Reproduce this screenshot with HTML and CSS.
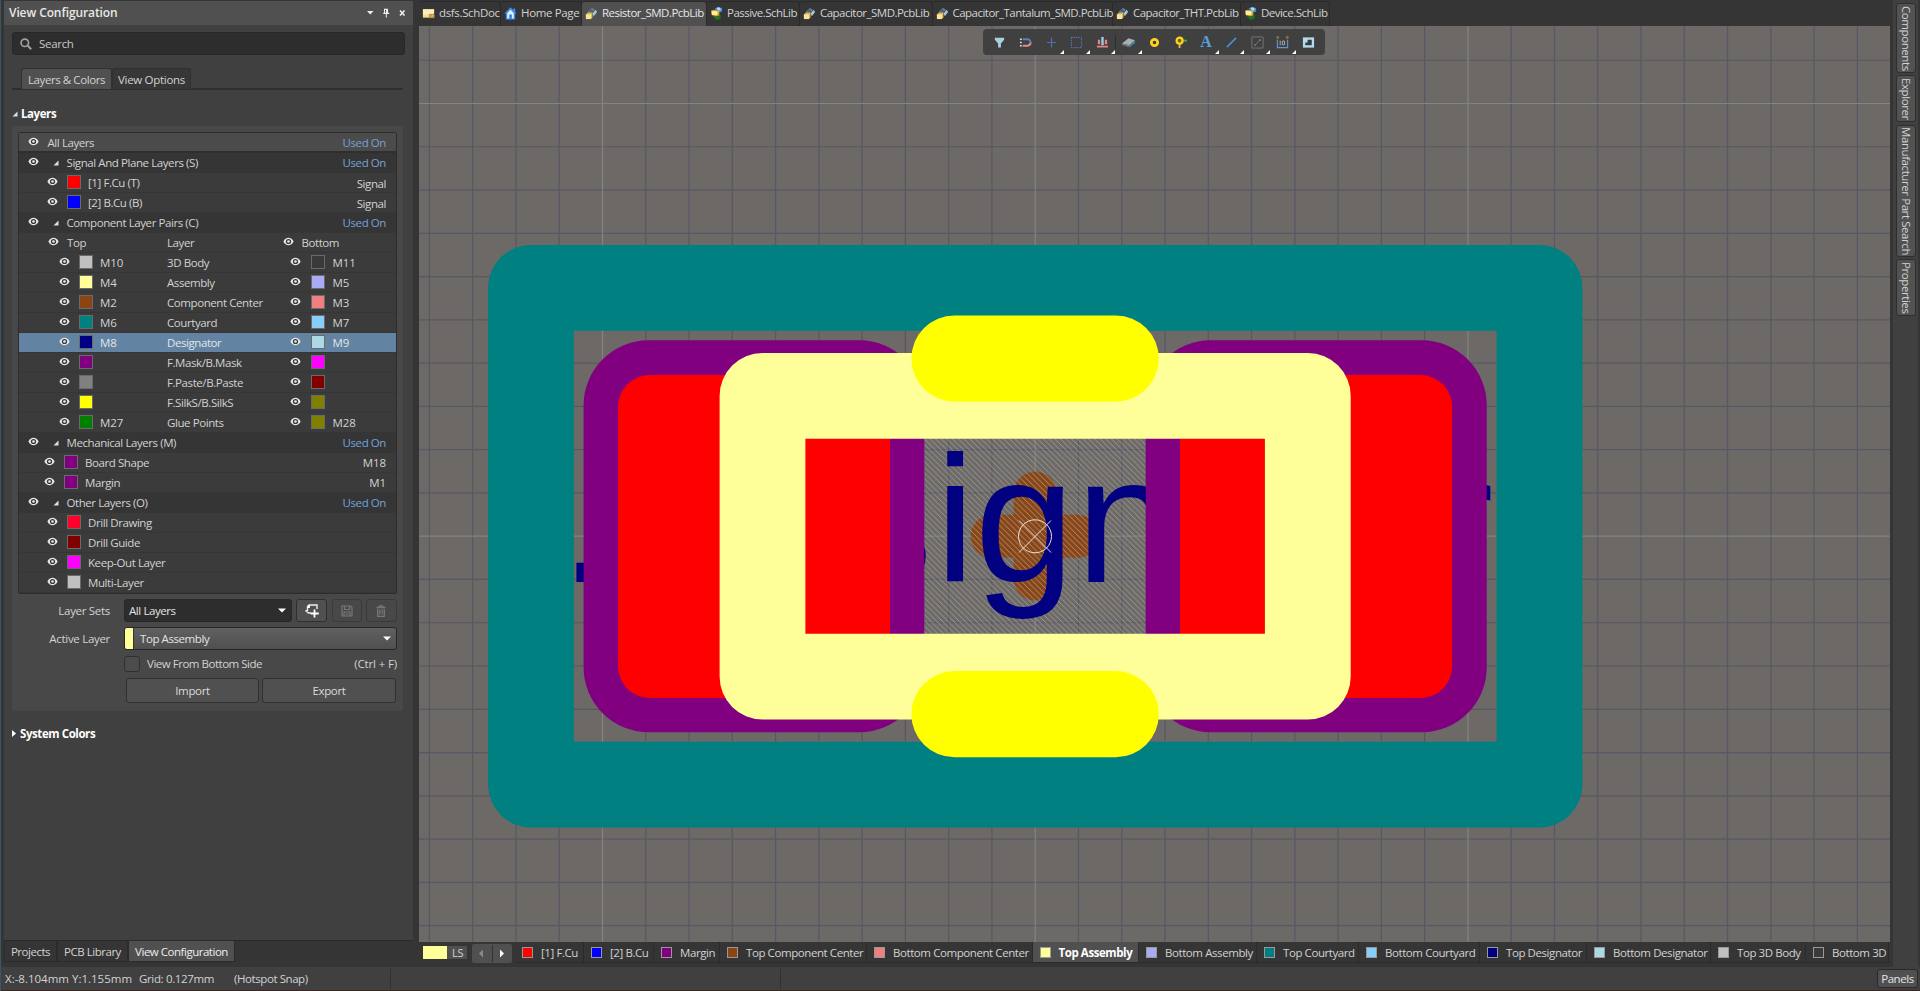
FILE: index.html
```html
<!DOCTYPE html>
<html lang="en">
<head>
<meta charset="utf-8">
<title>View Configuration</title>
<link rel="stylesheet" href="styles.css">
</head>
<body>
<svg class="defs" aria-hidden="true">
  <symbol id="eye" viewBox="0 0 12 10"><path d="M.3 5C1.7 2.1 3.6.8 6 .8S10.300 2.100 11.700 5C10.300 7.900 8.400 9.200 6 9.200S1.700 7.900.3 5Z" fill="#e6e6e6"/><circle cx="6" cy="5" r="2.900" fill="#383838"/><circle cx="6" cy="5" r="1.500" fill="#e6e6e6"/></symbol>
  <symbol id="open" viewBox="0 0 6 6"><path d="M5.500.5v5h-5z" fill="#e0e0e0"/></symbol>
  <symbol id="caret" viewBox="0 0 8 5"><path d="M0 .5h8L4 4.500z" fill="#fff"/></symbol>
  <symbol id="pcb" viewBox="0 0 14 14"><path d="M3 5 7.500 1l3 2-4 4z" fill="#6d8ba0"/><path d="m8 7 3.500-4L13 5.500 9.500 10z" fill="#a9c6d2"/><path d="M4 4 7.500 2 9 5 6 7z" fill="#46647c"/><path d="m1 8 2-2h5v5l-1.500 2H1z" fill="#d9b957"/><path d="M1 8h5.500v5H1z" fill="#fbe39a"/></symbol>
  <symbol id="sch" viewBox="0 0 14 14"><path d="m5 2 3-2 5 1v4L9 6z" fill="#3f8be0"/><path d="m7 1 3-.6L12 3 9 4z" fill="#b8dcfa"/><path d="m3 10 4-2 5 1-1 4-4 1z" fill="#25701f"/><path d="m1 4 3-1 6 1v5l-3 1-5-1z" fill="#d9aa2e"/><path d="M2 4.500h6v4H2z" fill="#fff1aa"/></symbol>
</svg>
<div class="app">
  <div class="work">
    <aside class="panel">
      <header class="panel-title"><h1>View Configuration</h1>
        <svg class="title-tools" viewBox="0 0 40 10"><path d="M0 3h6.500L3.200 6.500z" fill="#eee"/><path d="M17 .8h4v4h1.200v1.200h-2.400V9.500h-1V6h-2.600V4.800H17zM18 2v2.800h1V2z" fill="#eee" fill-rule="evenodd"/><path d="m33 2.500 4.500 5m0-5-4.500 5" stroke="#eee" stroke-width="1.600"/></svg>
      </header>
      <div class="panel-body">
        <div class="search"><svg viewBox="0 0 12 12"><circle cx="4.800" cy="4.800" r="3.700" fill="none" stroke="#a0a0a0" stroke-width="1.700"/><path d="m7.800 7.800 3.400 3.400" stroke="#a0a0a0" stroke-width="2"/></svg><span>Search</span></div>
        <nav class="view-tabs"><span class="view-tab active">Layers &amp; Colors</span><span class="view-tab">View Options</span></nav>
        <h2 class="section"><svg class="fold"><use href="#open"/></svg>Layers</h2>
        <section class="group">
          <div class="layers">
            <div class="row all"><svg class="eye"><use href="#eye"/></svg><span>All Layers</span><span class="link">Used On</span></div>
            <div class="row head"><svg class="eye"><use href="#eye"/></svg><svg class="fold"><use href="#open"/></svg><span>Signal And Plane Layers (S)</span><span class="link">Used On</span></div>
            <div class="row child"><svg class="eye"><use href="#eye"/></svg><i class="sw red"></i><span>[1] F.Cu (T)</span><span class="low">Signal</span></div>
            <div class="row child"><svg class="eye"><use href="#eye"/></svg><i class="sw blue"></i><span>[2] B.Cu (B)</span><span class="low">Signal</span></div>
            <div class="row head"><svg class="eye"><use href="#eye"/></svg><svg class="fold"><use href="#open"/></svg><span>Component Layer Pairs (C)</span><span class="link">Used On</span></div>
            <div class="row pairhead"><svg class="eye"><use href="#eye"/></svg><span>Top</span><span>Layer</span><svg class="eye"><use href="#eye"/></svg><span>Bottom</span></div>
            <div class="row pair"><svg class="eye"><use href="#eye"/></svg><i class="sw silver"></i><span class="code">M10</span><span>3D Body</span><svg class="eye"><use href="#eye"/></svg><i class="sw dark"></i><span class="code">M11</span></div>
            <div class="row pair"><svg class="eye"><use href="#eye"/></svg><i class="sw cream"></i><span class="code">M4</span><span>Assembly</span><svg class="eye"><use href="#eye"/></svg><i class="sw lilac"></i><span class="code">M5</span></div>
            <div class="row pair"><svg class="eye"><use href="#eye"/></svg><i class="sw brown"></i><span class="code">M2</span><span>Component Center</span><svg class="eye"><use href="#eye"/></svg><i class="sw coral"></i><span class="code">M3</span></div>
            <div class="row pair"><svg class="eye"><use href="#eye"/></svg><i class="sw teal"></i><span class="code">M6</span><span>Courtyard</span><svg class="eye"><use href="#eye"/></svg><i class="sw sky"></i><span class="code">M7</span></div>
            <div class="row pair selected"><svg class="eye"><use href="#eye"/></svg><i class="sw navy"></i><span class="code">M8</span><span>Designator</span><svg class="eye"><use href="#eye"/></svg><i class="sw pale"></i><span class="code">M9</span></div>
            <div class="row pair"><svg class="eye"><use href="#eye"/></svg><i class="sw purple"></i><span></span><span>F.Mask/B.Mask</span><svg class="eye"><use href="#eye"/></svg><i class="sw magenta"></i><span></span></div>
            <div class="row pair"><svg class="eye"><use href="#eye"/></svg><i class="sw gray"></i><span></span><span>F.Paste/B.Paste</span><svg class="eye"><use href="#eye"/></svg><i class="sw maroon"></i><span></span></div>
            <div class="row pair"><svg class="eye"><use href="#eye"/></svg><i class="sw yellow"></i><span></span><span>F.SilkS/B.SilkS</span><svg class="eye"><use href="#eye"/></svg><i class="sw olive"></i><span></span></div>
            <div class="row pair"><svg class="eye"><use href="#eye"/></svg><i class="sw green"></i><span class="code">M27</span><span>Glue Points</span><svg class="eye"><use href="#eye"/></svg><i class="sw olive"></i><span class="code">M28</span></div>
            <div class="row head"><svg class="eye"><use href="#eye"/></svg><svg class="fold"><use href="#open"/></svg><span>Mechanical Layers (M)</span><span class="link">Used On</span></div>
            <div class="row mech"><svg class="eye"><use href="#eye"/></svg><i class="sw purple"></i><span>Board Shape</span><span class="code">M18</span></div>
            <div class="row mech"><svg class="eye"><use href="#eye"/></svg><i class="sw purple"></i><span>Margin</span><span class="code">M1</span></div>
            <div class="row head"><svg class="eye"><use href="#eye"/></svg><svg class="fold"><use href="#open"/></svg><span>Other Layers (O)</span><span class="link">Used On</span></div>
            <div class="row child"><svg class="eye"><use href="#eye"/></svg><i class="sw crimson"></i><span>Drill Drawing</span></div>
            <div class="row child"><svg class="eye"><use href="#eye"/></svg><i class="sw maroon"></i><span>Drill Guide</span></div>
            <div class="row child"><svg class="eye"><use href="#eye"/></svg><i class="sw magenta"></i><span>Keep-Out Layer</span></div>
            <div class="row child"><svg class="eye"><use href="#eye"/></svg><i class="sw silver"></i><span>Multi-Layer</span></div>
          </div>
          <div class="form">
            <label>Layer Sets</label>
            <div class="sets">
              <div class="select"><span>All Layers</span><svg class="caret"><use href="#caret"/></svg></div>
              <span class="tool"><svg viewBox="0 0 14 14"><path d="M6 9H3.500L1 7l1.500-.5V2.500L4 1h8v4" fill="none" stroke="#eee" stroke-width="1.400"/><path d="M4 1v2H2.500M9.500 5.500v8M5.800 9.500h8" fill="none" stroke="#fff" stroke-width="1.800"/></svg></span>
              <span class="tool off"><svg viewBox="0 0 12 12"><path d="M1 1h8.500L11 2.500V11H1zM3.500 1v3.500h5V1M3 11V7h6v4M4.500 9h3" fill="none" stroke="#777" stroke-width="1.200"/></svg></span>
              <span class="tool off"><svg viewBox="0 0 12 12"><path d="M1.500 2.500h9M4.500 2.500V.8h3v1.700M2.700 4v7.400h6.600V4M4.800 4.500v5M7.200 4.500v5" fill="none" stroke="#777" stroke-width="1.300"/></svg></span>
            </div>
            <label>Active Layer</label>
            <div class="select active-layer"><i class="mark"></i><span>Top Assembly</span><svg class="caret"><use href="#caret"/></svg></div>
            <span></span>
            <div class="check"><i class="box"></i><span>View From Bottom Side</span><span class="key">(Ctrl + F)</span></div>
            <span></span>
            <div class="buttons"><span class="btn">Import</span><span class="btn">Export</span></div>
          </div>
        </section>
        <h2 class="section system"><svg class="closed" viewBox="0 0 4 7"><path d="M0 0v7l4-3.500z" fill="#fff"/></svg>System Colors</h2>
      </div>
      <nav class="panel-tabs"><span>Projects</span><span>PCB Library</span><span class="active">View Configuration</span></nav>
    </aside>
    <main class="editor">
      <nav class="docs">
        <span class="doc"><svg viewBox="0 0 14 14"><path d="M1 2.500h12v9H1z" fill="#f6dc8c"/><path d="M1 2.500h12v4L1 9z" fill="#fbeebb"/><path d="M8 8h5v3.500H8zM8 9.800h5M10 8v1.800" fill="none" stroke="#aa8a45"/></svg><b>dsfs.SchDoc</b></span>
        <span class="doc"><svg viewBox="0 0 14 14"><path d="M7 .3.5 7H2v6.500h10V7h1.500L12 5.300V1.500h-2v1.700z" fill="#3d8ee8"/><path d="M7 3 3.500 6.800v5.700h7V6.800z" fill="#e3f1ff"/><path d="M5.700 8h2.700v5.500H5.700z" fill="#2f7fe0"/></svg><b>Home Page</b></span>
        <span class="doc active"><svg><use href="#pcb"/></svg><b>Resistor_SMD.PcbLib</b></span>
        <span class="doc"><svg><use href="#sch"/></svg><b>Passive.SchLib</b></span>
        <span class="doc"><svg><use href="#pcb"/></svg><b>Capacitor_SMD.PcbLib</b></span>
        <span class="doc"><svg><use href="#pcb"/></svg><b>Capacitor_Tantalum_SMD.PcbLib</b></span>
        <span class="doc"><svg><use href="#pcb"/></svg><b>Capacitor_THT.PcbLib</b></span>
        <span class="doc"><svg><use href="#sch"/></svg><b>Device.SchLib</b></span>
      </nav>
      <div class="canvas">
        <svg class="board" viewBox="419 26 1471 916">
          <defs>
            <pattern id="hatch" x="924" y="438.500" width="5.670" height="5.670" patternUnits="userSpaceOnUse"><path d="M-1-1 7 7M-1 4.670l2 2M4.670-1l2 2" stroke="#a19f9c" stroke-width=".85"/></pattern>
          </defs>
          <g id="minor" stroke="#595765" stroke-width="1.200"></g>
          <path d="M602.500 26v916M1035.200 26v916M1467.900 26v916M419 103.500h1471M419 536.200h1471" stroke="#848380" stroke-width="1.200"/>
          <path d="M924.300 438.700h221.400V634H924.300z" fill="#808080" fill-opacity=".08"/>
          <path d="M1035.200 493v86M992.200 536.300h86" stroke="#8b4513" stroke-width="43" stroke-linecap="round"/>
          <path d="M924.300 438.700h221.400V634H924.300z" fill="url(#hatch)"/>
          <text class="designator" y="582" x="560 613 742 842.500 935.200 974.700 1076 1176 1276 1327 1433.500">.Designator</text>
          <g fill="#800080"><rect x="583.600" y="340.300" width="340.700" height="392" rx="65"/><rect x="1145.700" y="340.300" width="341" height="392" rx="65"/></g>
          <g fill="#f00"><rect x="618" y="375" width="272" height="323" rx="32"/><rect x="1180" y="375" width="272.200" height="323" rx="32"/></g>
          <g fill="none" stroke-width="85.800" stroke-linejoin="round"><path d="M531 287.900h1008.500v496.800H531z" stroke="#008080"/><path d="M762.500 395.900h545.300v280.800H762.500z" stroke="#ffff99"/></g>
          <path d="M954.500 358.500H1115.700M954.500 714.200H1115.700" stroke="#ff0" stroke-width="86.200" stroke-linecap="round"/>
          <g fill="none" stroke="#f3dfd2"><circle cx="1035" cy="536.300" r="16.500"/><path d="m1019 552.500 32-32M1019 520.500l32 32"/></g>
        </svg>
        <div class="toolbar">
          <span><svg viewBox="0 0 14 14"><path d="M2 2h10v2L8.500 8v4.500h-3V8L2 4z" fill="#a8d0e0"/></svg></span>
          <span><svg viewBox="0 0 14 14"><path d="M4 3.500h5a3.500 3.500 0 0 1 3.500 3.500" fill="none" stroke="#557fc8" stroke-width="2"/><path d="M12.500 7A3.500 3.500 0 0 1 9 10.500H4" fill="none" stroke="#ea8788" stroke-width="2.200"/><path d="M1 3.500h2M1 7h2M1 10.500h2" stroke="#ddd" stroke-width="1.500"/></svg></span>
          <span class="more"><svg viewBox="0 0 14 14"><path d="M7 2v10M2 7h10" stroke="#5370ab" stroke-width="1.300"/></svg></span>
          <span class="more"><svg viewBox="0 0 14 14"><path d="M1.500 1.500h11v11h-11z" fill="none" stroke="#5981c5" stroke-dasharray="1.500 1"/></svg></span>
          <span class="more"><svg viewBox="0 0 14 14"><path d="M2 4h2.500v5H2zM9.500 4H12v5H9.500zM1 10.500h12v2H1z" fill="#e98285"/><path d="M5.700 1h2.600v9H5.700z" fill="#9bcbe3"/></svg></span>
          <i class="sep"></i>
          <span class="more"><svg viewBox="0 0 14 14"><path d="m0 8 7-5.500 7 2L8 10z" fill="#a7b1b5"/><path d="m0 8 8 2v2L0 9.500z" fill="#747f84"/><path d="m8 10 6-5.500v3l-6 5z" fill="#43849a"/></svg></span>
          <span><svg viewBox="0 0 14 14"><circle cx="7" cy="7" r="3.400" fill="#3a3a3a" stroke="#ffd21e" stroke-width="3"/></svg></span>
          <span><svg viewBox="0 0 14 14"><path d="M6 7v6" stroke="#e4b552" stroke-width="2"/><path d="M8 5h6" stroke="#48a648" stroke-width="2"/><circle cx="6" cy="5" r="3.200" fill="#805f00" stroke="#ffd21e" stroke-width="2.400"/></svg></span>
          <span class="more letter">A</span>
          <span class="more"><svg viewBox="0 0 14 14"><path d="M2 12 12 2" stroke="#4c8ed6" stroke-width="1.700"/></svg></span>
          <span class="more"><svg viewBox="0 0 14 14"><path d="M1 1h12v12H1z" fill="none" stroke="#777"/><path d="m4.500 9.500 5-5" stroke="#777"/><circle cx="4.500" cy="9.500" r="1.200" fill="#777"/><circle cx="9.500" cy="4.500" r="1.200" fill="#777"/></svg></span>
          <span class="more"><svg viewBox="0 0 14 14"><path d="M1.500 4v8.500h11V4" fill="none" stroke="#6595cc" stroke-width="1.200"/><path d="M4.500 5v5M6.800 5.500h2.400v4H6.800z" fill="none" stroke="#bbb" stroke-width=".9"/><circle cx="1.800" cy="1.500" r="1" fill="none" stroke="#c98b2b"/><circle cx="12.200" cy="1.500" r="1" fill="none" stroke="#c98b2b"/></svg></span>
          <span><svg viewBox="0 0 14 14"><path d="M1 1.500h12v11H1z" fill="#b5dcec"/><path d="M6 4h4.500v6h-7V7H6z" fill="#343c40"/></svg></span>
        </div>
      </div>
      <nav class="layerbar">
        <span class="ls"><i></i><b>LS</b></span>
        <span class="arrows"><svg viewBox="0 0 40 19"><path d="M11 5.500v8L7 9.500z" fill="#888"/><path d="M20.500 1v17" stroke="#333"/><path d="M28 5.500v8l4-4z" fill="#fff"/></svg></span>
        <span class="tabs">
          <span><i class="sw red"></i><b>[1] F.Cu</b></span><span><i class="sw blue"></i><b>[2] B.Cu</b></span><span><i class="sw purple"></i><b>Margin</b></span><span><i class="sw brown"></i><b>Top Component Center</b></span><span><i class="sw coral"></i><b>Bottom Component Center</b></span><span class="active"><i class="sw cream"></i><b>Top Assembly</b></span><span><i class="sw lilac"></i><b>Bottom Assembly</b></span><span><i class="sw teal"></i><b>Top Courtyard</b></span><span><i class="sw sky"></i><b>Bottom Courtyard</b></span><span><i class="sw navy"></i><b>Top Designator</b></span><span><i class="sw pale"></i><b>Bottom Designator</b></span><span><i class="sw silver"></i><b>Top 3D Body</b></span><span><i class="sw dark"></i><b>Bottom 3D</b></span>
        </span>
      </nav>
    </main>
    <aside class="rail"><span>Components</span><span>Explorer</span><span>Manufacturer Part Search</span><span>Properties</span></aside>
  </div>
  <footer class="status"><span class="coords">X:-8.104mm Y:1.155mm</span><span class="gridsize">Grid: 0.127mm</span><span class="snap">(Hotspot Snap)</span><span class="blank"></span><span class="panels">Panels</span></footer>
</div>
<script src="grid.js"></script>
</body>
</html>
```
FILE: grid.js
```js
// Minor grid lines; every tenth line is the major grid, drawn separately.
const pitch = 43.27;
const origin = { x: 1035.2, y: 536.2 };
const minor = document.getElementById('minor');
let d = '';
for (let k = -14; k < 20; k++) {
  if (k % 10) d += `M${(origin.x + k * pitch).toFixed(2)} 26v916`;
}
for (let k = -11; k < 10; k++) {
  if (k % 10) d += `M419 ${(origin.y + k * pitch).toFixed(2)}h1471`;
}
const path = document.createElementNS('http://www.w3.org/2000/svg', 'path');
path.setAttribute('d', d);
minor.appendChild(path);
```
FILE: styles.css
```css
* { box-sizing: border-box; }
body { margin: 0; background: #353535; color: #d2d2d2; font: 11.5px/16px "Open Sans", "Noto Sans", sans-serif; letter-spacing: -.42px; overflow: hidden; }
b, i { font-weight: inherit; font-style: normal; }
span, b, label { white-space: nowrap; }
.defs { position: absolute; width: 0; height: 0; }
.app { width: 1920px; height: 991px; display: flex; flex-direction: column; border-left: 1px solid #3f5363; }
.work { height: 967px; display: flex; }

/* Left panel */
.panel { width: 412px; margin-right: 6px; padding: 1px 0 0 3px; display: flex; flex-direction: column; }
.panel-title { height: 24px; background: #505050; display: flex; align-items: center; justify-content: space-between; padding: 0 6px 0 5px; }
h1 { margin: 0; font-size: 12px; font-weight: 600; color: #e8e8e8; letter-spacing: -.1px; }
.title-tools { width: 40px; height: 10px; }
.panel-body { height: 916px; background: #404040; padding: 7px 10px 0 8px; border-bottom: 1px solid #2a2a2a; }
.search { height: 23px; background: #2d2d2d; border: 1px solid #272727; border-radius: 3px; display: flex; align-items: center; gap: 7px; padding-left: 7px; width: 393px; color: #c8c8c8; letter-spacing: -.3px; }
.search svg { width: 12px; height: 12px; }
.view-tabs { margin-top: 13px; width: 391px; height: 22px; border-bottom: 2px solid #2f2f2f; padding-left: 9px; display: flex; letter-spacing: -.25px; }
.view-tab { height: 21px; line-height: 21px; border: 1px solid #303030; border-bottom: 0; border-radius: 3px 3px 0 0; background: #373737; padding: 0 6px; }
.view-tab.active { background: #505050; }
.view-tab:nth-child(1) { width: 91px; letter-spacing: -.42px; }
.view-tab:nth-child(2) { width: 79px; padding: 0 5px; letter-spacing: -.3px; }
.section { margin: 15px 0 4px; height: 17px; font-size: 11.5px; font-weight: 700; color: #fff; display: flex; align-items: center; gap: 3px; line-height: 17px; }
.fold { width: 6px; height: 6px; }
.closed { width: 4px; height: 7px; margin-right: 1px; }
.group { width: 391px; height: 585px; background: #484848; border-radius: 3px; padding: 6px 6px 0 6px; }
.layers { width: 379px; border: 1px solid #2d2d2d; border-radius: 2px; background: #3b3b3b; }
.row { height: 20px; display: grid; grid-template-rows: 19px; align-items: center; padding-right: 10px; border-bottom: 1px solid #363636; line-height: 19px; }
.eye { width: 11px; height: 9px; }
.row .eye { margin-top: -2px; }
.row.all { background: #4b4b4b; border-bottom: 2px solid #2f2f2f; grid-template-columns: 19.500px 1fr auto; padding-left: 9px; }
.row.head { background: #353535; grid-template-columns: 25px 13.5px 1fr auto; padding-left: 9px; }
.row.child { grid-template-columns: 20px 21px 1fr auto; padding-left: 28px; }
.row.mech { grid-template-columns: 19.5px 21.500px 1fr auto; padding-left: 25px; }
.row.pairhead { grid-template-columns: 19px 100px 116px 18.5px 1fr; padding-left: 29px; }
.row.pair { grid-template-columns: 20px 21.5px 67px 123px 20.500px 22px 1fr; padding-left: 39.500px; }
.row.selected { background: #6383a3; color: #e2e6ea; }
.low { padding-top: 3px; line-height: 16px; }
.code { letter-spacing: -.05px; }
.link { color: #74a2d6; }
.sw { width: 14px; height: 14px; border: 1px solid #6a6a6a; }
.row .sw { margin-top: -2px; }
.red { background: #f00; } .blue { background: #00f; } .silver { background: #c0c0c0; }
.dark { background: #3a3a3a; } .cream { background: #ff9; } .lilac { background: #aaaaf5; }
.brown { background: #8b4513; } .coral { background: #f08080; } .teal { background: #008080; }
.sky { background: #87cefa; } .navy { background: #000080; } .pale { background: #add8e6; }
.purple { background: #800080; } .magenta { background: #f0f; } .gray { background: #808080; }
.maroon { background: #800000; } .yellow { background: #ff0; } .olive { background: #808000; }
.green { background: #008000; } .crimson { background: #ff002b; }

.form { display: grid; grid-template-columns: 92px 273px; column-gap: 14px; grid-template-rows: 23px 23px 17px 25px; margin-top: 5px; row-gap: 5px; align-items: center; }
.form label { text-align: right; letter-spacing: -.3px; }
.sets { display: grid; grid-template-columns: 168px 31px 30px 31px; justify-content: space-between; }
.select { height: 23px; background: #2d2d2d; border: 1px solid #272727; border-radius: 3px; display: flex; align-items: center; justify-content: space-between; padding: 0 5px 0 4px; color: #e4e4e4; line-height: 20px; }
.caret { width: 8px; height: 5px; }
.active-layer { background: linear-gradient(#606060, #505050); padding-left: 0; }
.active-layer span { flex: 1; padding-left: 6px; }
.mark { width: 9px; height: 21px; background: #ff9; border-right: 1px solid #333; border-radius: 2px 0 0 2px; }
.tool { height: 23px; border: 1px solid #2f2f2f; border-radius: 3px; background: #505050; display: grid; place-items: center; }
.tool.off { background: #484848; border-color: #3a3a3a; }
.tool svg { width: 14px; height: 14px; }
.tool.off svg { width: 12px; height: 12px; }
.check { display: flex; align-items: center; gap: 7px; padding-top: 1px; letter-spacing: -.48px; }
.box { width: 16px; height: 16px; background: #4c4c4c; border: 1px solid #303030; border-radius: 3px; }
.key { margin-left: auto; letter-spacing: -.15px; }
.buttons { display: grid; grid-template-columns: 133px 134px; gap: 3px; padding-left: 2px; padding-top: 2px; letter-spacing: -.35px; }
.btn { height: 25px; border: 1px solid #303030; border-radius: 3px; background: #505050; text-align: center; line-height: 23px; color: #dcdcdc; }
.section.system { margin-top: 14px; }
.panel-tabs { display: flex; letter-spacing: -.48px; }
.panel-tabs span { height: 21px; line-height: 22px; border: 1px solid #2b2b2b; border-top: 0; text-align: center; }
.panel-tabs span:nth-child(1) { width: 53px; }
.panel-tabs span:nth-child(2) { width: 71px; }
.panel-tabs span:nth-child(3) { width: 107px; }
.panel-tabs .active { background: #505050; color: #eee; }

/* Editor */
.editor { width: 1471px; display: flex; flex-direction: column; }
.docs { height: 26px; padding-top: 1px; display: flex; letter-spacing: -.52px; }
.doc { height: 25px; display: flex; align-items: center; gap: 4px; padding: 0 0 2px 3px; border: 1px solid #2a2a2a; border-left-width: 0; border-bottom: 0; border-radius: 3px 3px 0 0; }
.doc svg { width: 13px; height: 13px; flex: none; }
.doc.active { background: #505050; color: #e6e6e6; }
.doc:nth-child(1) { width: 82px; } .doc:nth-child(2) { width: 81px; } .doc:nth-child(3) { width: 125px; } .doc:nth-child(4) { width: 93px; }
.doc:nth-child(5) { width: 132.500px; } .doc:nth-child(6) { width: 180.500px; } .doc:nth-child(7) { width: 128px; } .doc:nth-child(8) { width: 89px; }
.doc:nth-child(1), .doc:nth-child(2) { letter-spacing: -.35px; }
.canvas { height: 916px; position: relative; background: #6c6967; }
.board { display: block; width: 1471px; height: 916px; }
.designator { font: 179.500px "Liberation Sans", Arial, sans-serif; letter-spacing: 0; fill: #000080; }
.toolbar { position: absolute; left: 564px; top: 3px; width: 342px; height: 26px; background: #404040; border-radius: 4px; display: flex; align-items: center; padding-left: 4px; }
.toolbar span { position: relative; width: 25.700px; height: 26px; display: grid; place-items: center; flex: none; }
.toolbar svg { width: 13px; height: 13px; }
.toolbar .more::after { content: ""; position: absolute; right: 0; bottom: 1px; border: solid transparent; border-width: 2px; border-right-color: #fff; border-bottom-color: #fff; }
.toolbar .letter { font: bold 16px "Liberation Serif", serif; color: #5c9fdf; }
.sep { width: 1px; height: 14px; background: #2d2d2d; margin-right: -.6px; }
.layerbar { height: 21px; display: flex; }
.ls { display: flex; margin: 4px 5px 0 4px; height: 13px; width: 44px; }
.ls i { width: 24px; background: #ff9; }
.ls b { width: 20px; background: #505050; text-align: right; padding-right: 4px; line-height: 14px; font-size: 11px; }
.arrows { width: 40px; height: 19px; margin-top: 2px; background: #505050; border-radius: 2px; }
.arrows svg { display: block; width: 40px; height: 19px; }
.tabs { display: flex; margin-left: 3px; flex: 1; overflow: hidden; }
.tabs > span { flex: none; display: flex; align-items: center; gap: 8px; height: 21px; padding: 2px 0 0 7px; border: 1px solid #2b2b2b; border-width: 0 1px 1px 0; }
.tabs .sw { width: 11px; height: 11px; border-color: #999; flex: none; margin-top: -2px; }
.tabs .active { background: #505050; color: #fff; font-weight: 700; }
.tabs > :nth-child(1) { width: 69px; } .tabs > :nth-child(2) { width: 70px; } .tabs > :nth-child(3) { width: 66px; } .tabs > :nth-child(4) { width: 147px; }
.tabs > :nth-child(5) { width: 165.500px; } .tabs > :nth-child(6) { width: 106.500px; } .tabs > :nth-child(7) { width: 118px; } .tabs > :nth-child(8) { width: 102px; }
.tabs > :nth-child(9) { width: 121px; } .tabs > :nth-child(10) { width: 107px; } .tabs > :nth-child(11) { width: 124px; } .tabs > :nth-child(12) { width: 95px; } .tabs > :nth-child(13) { width: 83px; }

/* Right rail */
.rail { width: 25px; margin-left: 3px; background: #404040; padding: 3px 0 0 3px; display: flex; flex-direction: column; }
.rail span { writing-mode: vertical-rl; width: 20px; line-height: 18px; border: 1px solid #2e2e2e; border-radius: 3px; background: #525252; text-align: center; margin-bottom: 3px; }
.rail :nth-child(1) { height: 70px; margin-bottom: 2px; } .rail :nth-child(2) { height: 47px; } .rail :nth-child(3) { height: 132px; margin-bottom: 2px; } .rail :nth-child(4) { height: 57px; }

/* Status bar */
.status { height: 24px; background: #404040; border-bottom: 1px solid #3a2622; display: flex; align-items: center; padding: 0 2px 0 4px; }
.coords { width: 134px; letter-spacing: 0; } .gridsize { width: 95px; letter-spacing: -.35px; } .snap { width: 157px; height: 20px; line-height: 20px; border-right: 1px solid #303030; letter-spacing: -.42px; } .blank { width: 390px; height: 20px; border-right: 1px solid #303030; }
.panels { margin-left: auto; width: 41px; height: 19px; line-height: 17px; text-align: center; border: 1px solid #2a2a2a; border-radius: 3px; background: #505050; color: #e4e4e4; }
```
